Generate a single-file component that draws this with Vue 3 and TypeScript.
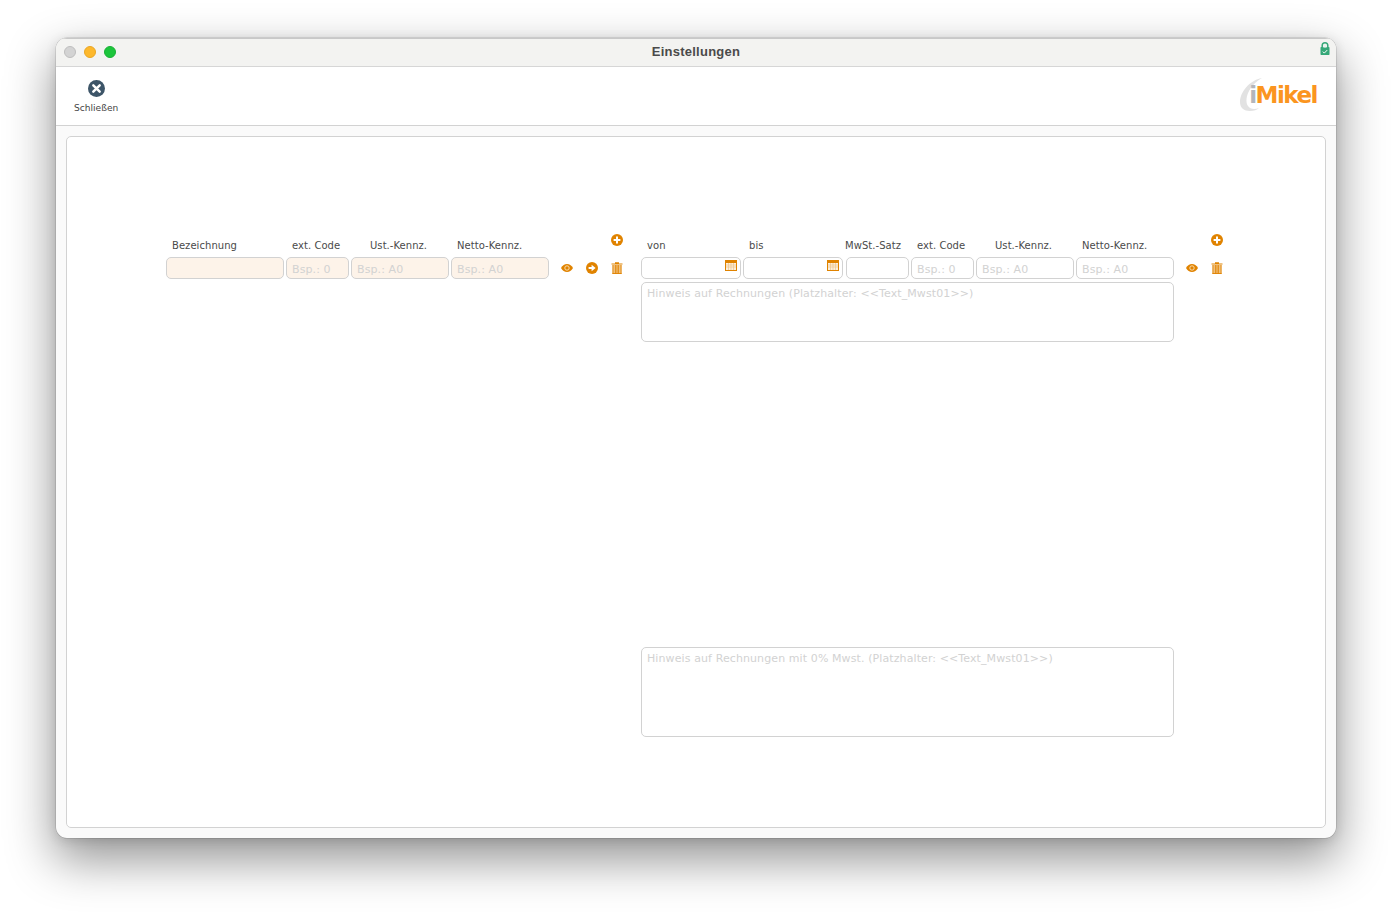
<script setup lang="ts">
interface Field { label: string; placeholder: string; width: number; labelClass?: string; date?: boolean }
const leftFields: Field[] = [
  { label: 'Bezeichnung', placeholder: '', width: 118 },
  { label: 'ext. Code', placeholder: 'Bsp.: 0', width: 63 },
  { label: 'Ust.-Kennz.', placeholder: 'Bsp.: A0', width: 98, labelClass: 'inset' },
  { label: 'Netto-Kennz.', placeholder: 'Bsp.: A0', width: 98 },
]
const rightFields: Field[] = [
  { label: 'von', placeholder: '', width: 100, date: true },
  { label: 'bis', placeholder: '', width: 100, date: true },
  { label: 'MwSt.-Satz', placeholder: '', width: 63, labelClass: 'outset' },
  { label: 'ext. Code', placeholder: 'Bsp.: 0', width: 63 },
  { label: 'Ust.-Kennz.', placeholder: 'Bsp.: A0', width: 98, labelClass: 'inset' },
  { label: 'Netto-Kennz.', placeholder: 'Bsp.: A0', width: 98 },
]
</script>

<template>
  <div class="window">
    <header class="titlebar">
      <div class="lights">
        <span class="light grey"></span>
        <span class="light amber"></span>
        <span class="light green"></span>
      </div>
      <h1 class="title">Einstellungen</h1>
      <svg class="lock" width="10" height="13" viewBox="0 0 10 13">
        <path d="M2.200 6V3.600a2.800 2.800 0 0 1 5.600 0V6" fill="none" stroke="#35a878" stroke-width="1.500" />
        <rect x="0.500" y="5" width="9" height="8" rx="0.800" fill="#35a878" />
        <rect x="3.400" y="2.600" width="3.200" height="3" fill="#e8f3ee" />
        <path d="M2.800 9.600l1.500 1.500 2.900-3" fill="none" stroke="#fff" stroke-width="1" />
      </svg>
    </header>

    <div class="toolbar">
      <button class="close" type="button">
        <svg width="17" height="17" viewBox="0 0 16 16">
          <circle cx="8" cy="8" r="8" fill="#3d5568" />
          <path d="M5 5l6 6M11 5l-6 6" stroke="#fff" stroke-width="2.300" stroke-linecap="round" />
        </svg>
        <span>Schließen</span>
      </button>
      <div class="logo">
        <svg class="swoosh" width="24" height="34" viewBox="0 0 24 34">
          <path d="M22 0C10 2 0 14 0 24c0 6 4 9 10 9 4 0 7-1 9-3-5 2-9 1-11-2C4 22 8 8 22 0z" fill="#e2e2e2" />
        </svg>
        <span class="logo-i">i</span><span class="logo-m">Mikel</span>
      </div>
    </div>

    <main class="content">
      <section class="panel">
        <div class="editor">
          <div class="block left">
            <div class="form">
              <div class="labels">
                <span v-for="f in leftFields" :key="f.label" class="label" :class="f.labelClass" :style="{ width: f.width + 'px' }">{{ f.label }}</span>
              </div>
              <div class="inputs">
                <input v-for="f in leftFields" :key="f.label" class="field tinted" :placeholder="f.placeholder" :style="{ width: f.width + 'px' }" />
              </div>
            </div>
            <div class="actions">
              <div class="action-row top">
                <svg class="icon" viewBox="0 0 12 12"><circle cx="6" cy="6" r="6" fill="#e08300" /><path d="M6 2.600v6.800M2.600 6h6.800" stroke="#fff" stroke-width="2" /></svg>
              </div>
              <div class="action-row">
                <svg class="icon eye" viewBox="0 0 12 8"><path d="M0 4c1.500-2.600 3.600-4 6-4s4.500 1.400 6 4c-1.500 2.600-3.600 4-6 4S1.500 6.600 0 4z" fill="#e08300" /><circle cx="6" cy="4" r="2.200" fill="none" stroke="#fbe3c0" stroke-width="0.900" /></svg>
                <svg class="icon" viewBox="0 0 12 12"><circle cx="6" cy="6" r="6" fill="#e08300" /><path d="M2.600 5h3V2.800L9.600 6l-4 3.200V7h-3z" fill="#fff" /></svg>
                <svg class="icon" viewBox="0 0 12 12"><path d="M.5 1.500h11v1H.5zM4 .2h4v1.300H4z" fill="#e08300" /><path d="M1.500 3h9v9h-9z" fill="#f4cf9c" /><path d="M2 3v9M4.300 3v9M6 3v9M7.700 3v9M10 3v9M1.500 11.600h9" stroke="#e08300" stroke-width="1" /></svg>
              </div>
            </div>
          </div>

          <div class="block right">
            <div class="form">
              <div class="labels">
                <span v-for="f in rightFields" :key="f.label" class="label" :class="f.labelClass" :style="{ width: f.width + 'px' }">{{ f.label }}</span>
              </div>
              <div class="inputs">
                <div v-for="f in rightFields" :key="f.label" class="field-wrap" :style="{ width: f.width + 'px' }">
                  <input class="field" :placeholder="f.placeholder" />
                  <svg v-if="f.date" class="cal" width="12" height="11" viewBox="0 0 12 11">
                    <rect width="12" height="11" fill="#e08300" />
                    <rect x="1" y="3" width="10" height="7" fill="#fdf0dc" />
                    <path d="M1 5h10M1 7h10M3.500 3v7M6 3v7M8.500 3v7" stroke="#eec48a" stroke-width="0.700" />
                  </svg>
                </div>
              </div>
              <textarea class="note short" placeholder="Hinweis auf Rechnungen (Platzhalter: <<Text_Mwst01>>)"></textarea>
              <textarea class="note tall" placeholder="Hinweis auf Rechnungen mit 0% Mwst. (Platzhalter: <<Text_Mwst01>>)"></textarea>
            </div>
            <div class="actions narrow">
              <div class="action-row top">
                <svg class="icon" viewBox="0 0 12 12"><circle cx="6" cy="6" r="6" fill="#e08300" /><path d="M6 2.600v6.800M2.600 6h6.800" stroke="#fff" stroke-width="2" /></svg>
              </div>
              <div class="action-row">
                <svg class="icon eye" viewBox="0 0 12 8"><path d="M0 4c1.500-2.600 3.600-4 6-4s4.500 1.400 6 4c-1.500 2.600-3.600 4-6 4S1.500 6.600 0 4z" fill="#e08300" /><circle cx="6" cy="4" r="2.200" fill="none" stroke="#fbe3c0" stroke-width="0.900" /></svg>
                <svg class="icon" viewBox="0 0 12 12"><path d="M.5 1.500h11v1H.5zM4 .2h4v1.300H4z" fill="#e08300" /><path d="M1.500 3h9v9h-9z" fill="#f4cf9c" /><path d="M2 3v9M4.300 3v9M6 3v9M7.700 3v9M10 3v9M1.500 11.600h9" stroke="#e08300" stroke-width="1" /></svg>
              </div>
            </div>
          </div>
        </div>
      </section>
    </main>
  </div>
</template>

<style>
html, body { margin: 0; background: #fff; }
</style>

<style scoped>
.window {
  position: relative;
  box-sizing: border-box;
  width: 1280px;
  height: 800px;
  margin: 38px 56px 74px;
  display: flex;
  flex-direction: column;
  border-radius: 11px;
  overflow: hidden;
  background: #fafafa;
  font-family: "DejaVu Sans", Verdana, sans-serif;
  color: #444;
  box-shadow: 0 0 0 0.5px rgba(0, 0, 0, 0.18), 0 20px 48px 2px rgba(0, 0, 0, 0.42), 0 2px 12px rgba(0, 0, 0, 0.12);
}
.titlebar {
  position: relative;
  flex: none;
  height: 29px;
  box-sizing: border-box;
  border-top: 1px solid #c8c8c8;
  border-bottom: 1px solid #d6d6d6;
  background: #f3f3f1;
  display: flex;
  align-items: center;
  justify-content: center;
  padding-bottom: 2px;
}
.lights { position: absolute; left: 8px; top: 7px; display: flex; gap: 8px; }
.light { width: 12px; height: 12px; border-radius: 50%; box-sizing: border-box; border: 1px solid; }
.grey { background: #d3d3d3; border-color: #bdbdbd; }
.amber { background: #fdb82c; border-color: #e9a623; }
.green { background: #1cc53c; border-color: #19b035; }
.title { margin: 0; font-size: 13px; font-weight: 700; font-family: "Liberation Sans", Arial, sans-serif; color: #4a4a4a; letter-spacing: 0.25px; }
.lock { position: absolute; right: 6px; top: 3px; }
.toolbar {
  flex: none;
  height: 59px;
  box-sizing: border-box;
  background: #fff;
  border-bottom: 1px solid #d2d2d2;
  display: flex;
  justify-content: space-between;
  align-items: flex-start;
  padding: 13px 19px 0 18px;
}
.close {
  all: unset;
  display: flex;
  flex-direction: column;
  align-items: center;
  gap: 5px;
  font-size: 9.100px;
  line-height: 12px;
  color: #444;
}
.logo {
  position: relative;
  display: flex;
  align-items: baseline;
  font-family: "DejaVu Sans", Verdana, sans-serif;
  font-weight: 700;
  font-size: 23px;
  line-height: 30px;
  letter-spacing: -1.500px;
}
.swoosh { position: absolute; left: -9px; top: -2px; }
.logo-i { position: relative; color: #b4b6ba; }
.logo-m { position: relative; color: #fb9520; }
.content { flex: 1; padding: 10px; min-height: 0; display: flex; }
.panel {
  flex: 1;
  box-sizing: border-box;
  background: #fff;
  border: 1px solid #d2d2d2;
  border-radius: 5px;
  padding: 99px 0 0 99px;
}
.editor { display: flex; align-items: flex-start; gap: 18px; }
.block { display: flex; align-items: flex-start; }
.form { display: flex; flex-direction: column; }
.labels { display: flex; gap: 2px; height: 21px; align-items: flex-start; }
.label {
  flex: none;
  box-sizing: border-box;
  padding: 3px 0 0 6px;
  font-size: 10px;
  letter-spacing: 0.05px;
  line-height: 13px;
  color: #4a4a4a;
  white-space: nowrap;
}
.label.inset { padding-left: 19px; }
.label.outset { padding-left: 0; margin-left: 1px; text-indent: -1px; }
.inputs { display: flex; gap: 2px; }
.field-wrap { position: relative; flex: none; display: flex; }
.field-wrap:nth-child(3) { margin-left: 1px; }
.field {
  box-sizing: border-box;
  width: 100%;
  height: 22px;
  border: 1px solid #d2d2d2;
  border-radius: 5px;
  padding: 2px 5px 0;
  outline: none;
  background: #fff;
  font: 11px "DejaVu Sans", Verdana, sans-serif;
  letter-spacing: 0.1px;
  flex: none;
}
.tinted { background: #fdf3e9; }
.field::placeholder, .note::placeholder { color: #d2d2d2; opacity: 1; }
.cal { position: absolute; right: 4px; top: 3px; }
.note {
  display: block;
  box-sizing: border-box;
  width: 533px;
  border: 1px solid #d2d2d2;
  border-radius: 5px;
  padding: 4px 5px;
  outline: none;
  resize: none;
  background: #fff;
  font: 11px/13px "DejaVu Sans", Verdana, sans-serif;
  letter-spacing: 0.1px;
}
.short { height: 60px; margin-top: 3px; }
.tall { height: 90px; margin-top: 305px; }
.actions { display: flex; flex-direction: column; align-items: flex-end; width: 74px; flex: none; margin-top: -2px; }
.actions.narrow { width: 49px; }
.action-row { display: flex; height: 22px; align-items: center; gap: 13px; }
.action-row.top { height: 23px; align-items: flex-start; }
.icon { width: 12px; height: 12px; flex: none; display: block; }
.eye { height: 8px; }
</style>
